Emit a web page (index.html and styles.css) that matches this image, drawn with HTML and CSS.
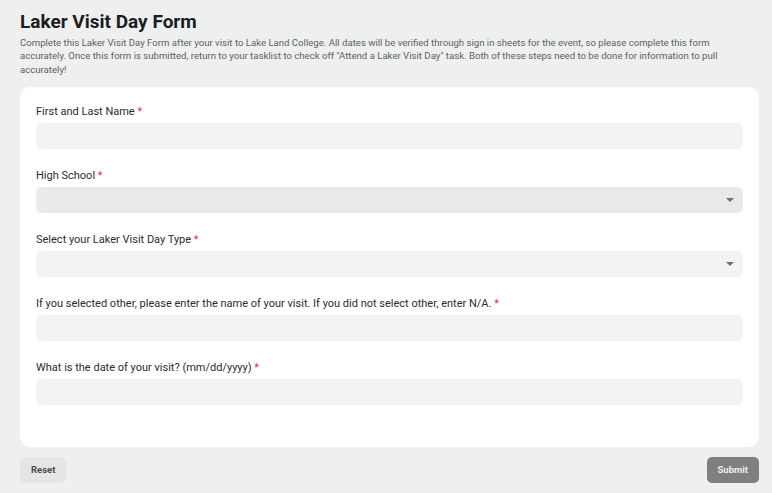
FILE: index.html
```html
<!DOCTYPE html>
<html>

<head>
    <title>Laker Visit Day Form</title>
    <link rel="stylesheet" href="styles.css">
</head>

<body>

    <header class="form-header">
        <h1>Laker Visit Day Form</h1>
        <p class="form-intro">Complete this Laker Visit Day Form after your visit to Lake Land College. All dates will be verified through sign in sheets for the event, so please complete this form accurately. Once this form is submitted, return to your tasklist to check off "Attend a Laker Visit Day" task. Both of these steps need to be done for information to pull accurately!</p>
    </header>

    <form class="card" onsubmit="return false">
        <div class="field">
            <label for="full-name">First and Last Name <span class="req">*</span></label>
            <input type="text" id="full-name" class="control">
        </div>

        <div class="field">
            <label for="high-school">High School <span class="req">*</span></label>
            <div class="select-wrap">
                <select id="high-school" class="control control-dark"></select>
            </div>
        </div>

        <div class="field">
            <label for="visit-type">Select your Laker Visit Day Type <span class="req">*</span></label>
            <div class="select-wrap">
                <select id="visit-type" class="control"></select>
            </div>
        </div>

        <div class="field">
            <label for="visit-name">If you selected other, please enter the name of your visit. If you did not select other, enter N/A. <span class="req">*</span></label>
            <input type="text" id="visit-name" class="control">
        </div>

        <div class="field">
            <label for="visit-date">What is the date of your visit? (mm/dd/yyyy) <span class="req">*</span></label>
            <input type="text" id="visit-date" class="control">
        </div>
    </form>

    <div class="actions">
        <button type="button" class="btn btn-reset">Reset</button>
        <button type="button" class="btn btn-submit">Submit</button>
    </div>

</body>

</html>
```

FILE: styles.css
```css
body {
    margin: 0;
    padding: 0 13px 0 20px;
    font-family: Roboto, 'Liberation Sans', sans-serif;
    color: #1f2024;
    background: #eeefef;
}

h1 {
    margin: 0;
    padding-top: 10px;
    font-size: 19px;
    font-weight: 700;
    line-height: 24px;
    color: #1c1d21;
}

.form-intro {
    margin: 2px 0 0;
    padding-right: 12px;
    font-size: 9.6px;
    line-height: 13.3px;
    color: #5f6166;
}

.card {
    margin-top: 11px;
    padding: 18px 16px 22px;
    background: #ffffff;
    border-radius: 11px;
}

.field {
    margin-bottom: 20px;
}

.field label {
    display: block;
    font-size: 11px;
    line-height: 14px;
    color: #2b2c30;
    margin-bottom: 4px;
}

.req {
    color: #d23a4e;
}

.control {
    display: block;
    box-sizing: border-box;
    width: 100%;
    height: 26px;
    border: none;
    border-radius: 6px;
    background: #f3f3f4;
    font: inherit;
    appearance: none;
    outline: none;
}

.control-dark {
    background: #e9e9ea;
}

.select-wrap {
    position: relative;
}

/* small caret drawn over the right side of each select */
.select-wrap::after {
    content: "";
    position: absolute;
    right: 9px;
    top: 11px;
    border-left: 4px solid transparent;
    border-right: 4px solid transparent;
    border-top: 4px solid #6e7075;
}

.actions {
    display: flex;
    justify-content: space-between;
    align-items: center;
    margin-top: 10px;
}

.btn {
    border: none;
    border-radius: 5px;
    font-family: inherit;
    font-size: 9.5px;
    font-weight: 700;
    height: 26px;
    padding: 0 11px;
}

.btn-reset {
    background: #e5e5e6;
    color: #4b4d52;
}

.btn-submit {
    background: #7f7f7f;
    color: #eeeeee;
}
```
